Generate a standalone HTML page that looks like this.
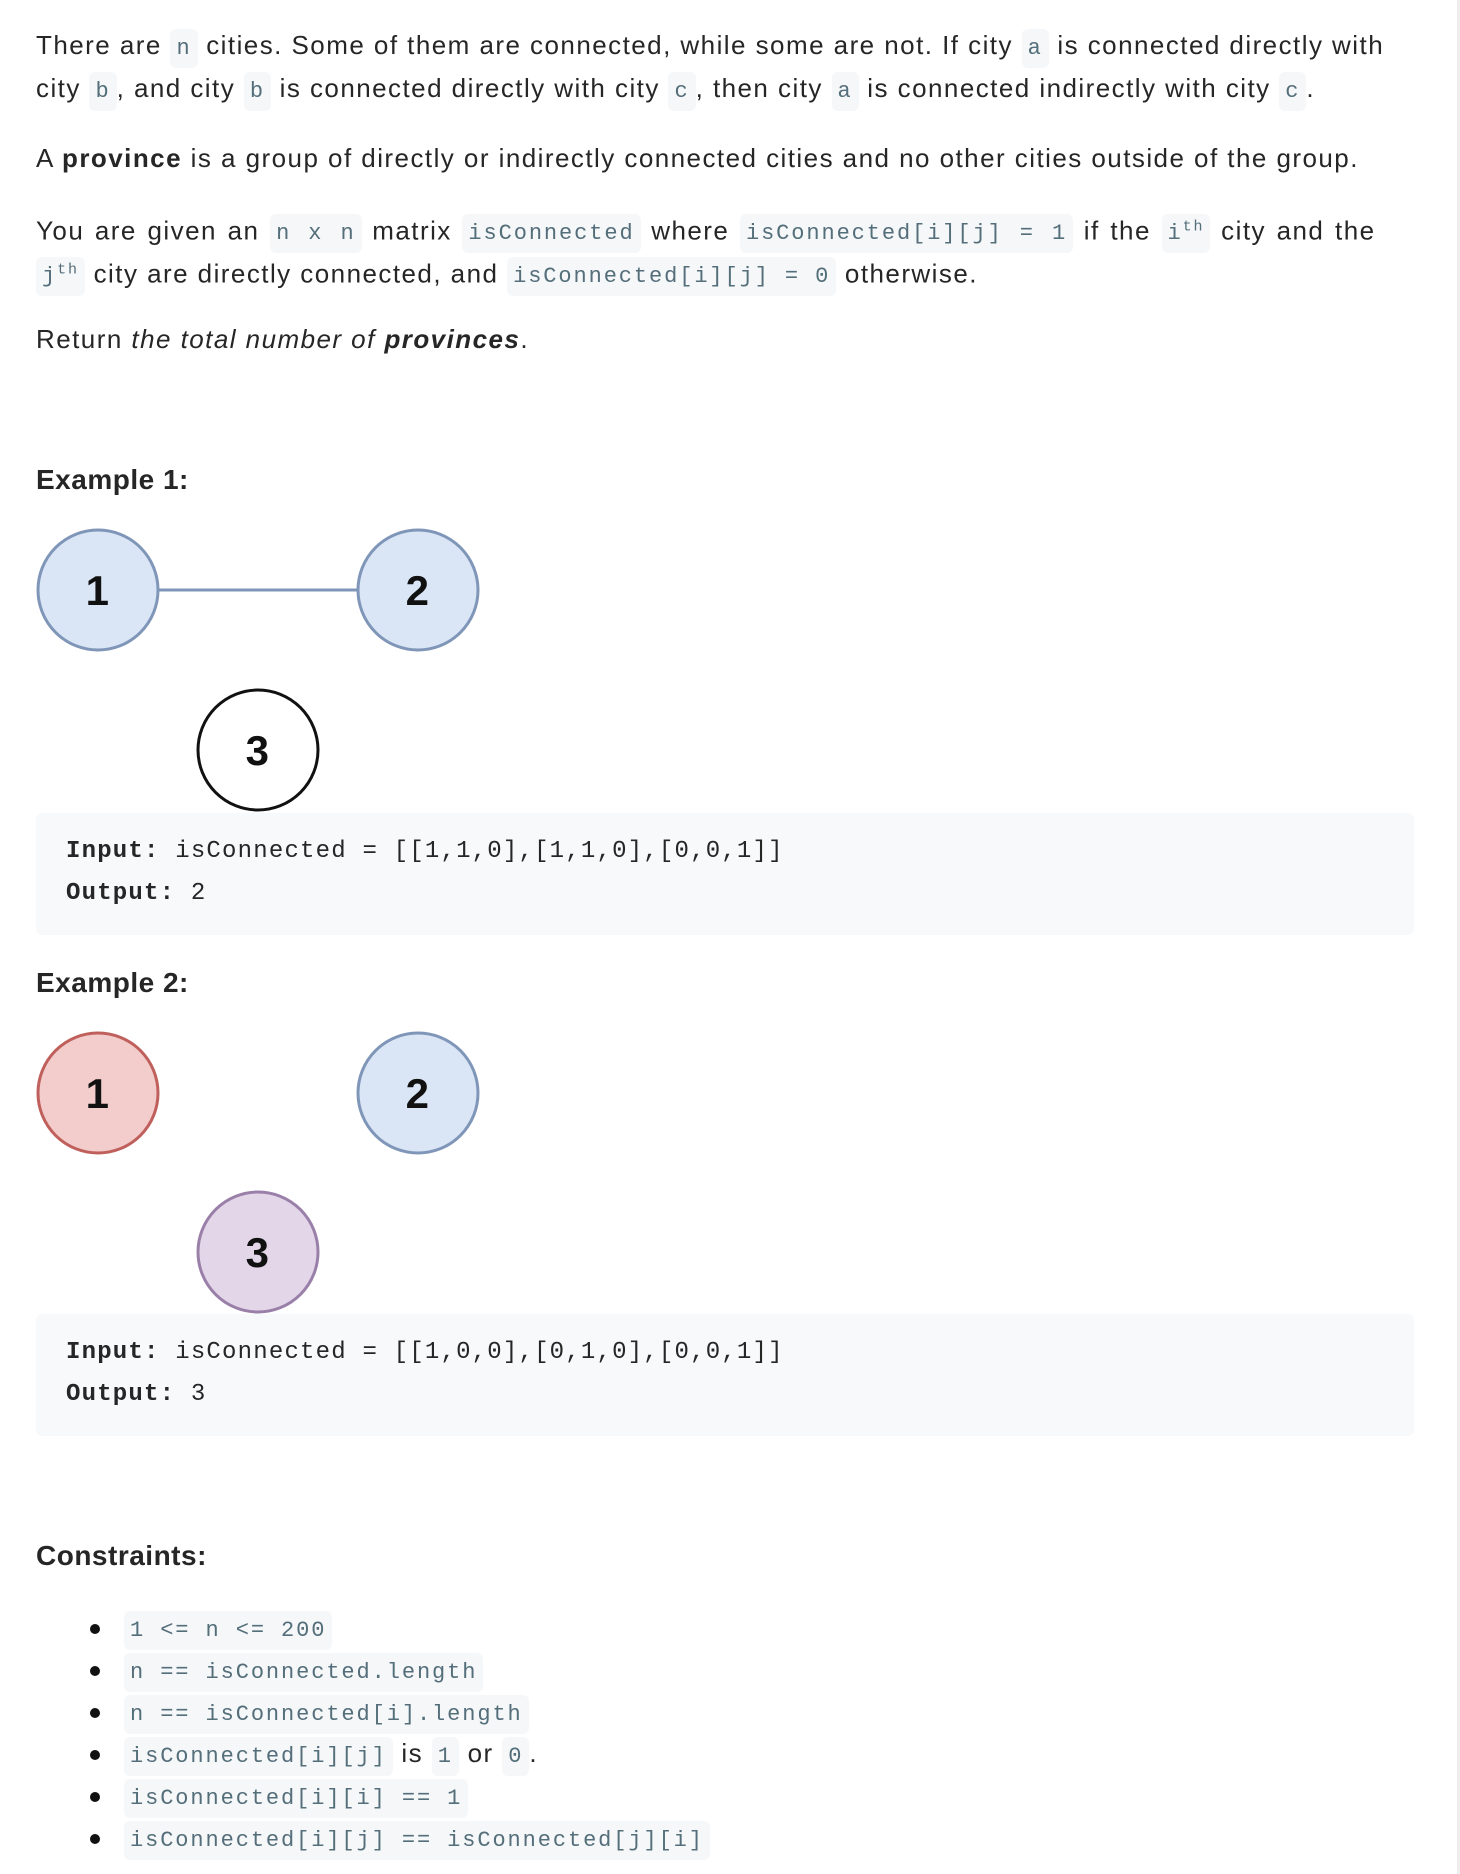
<!DOCTYPE html>
<html><head><meta charset="utf-8"><style>
body{margin:0;width:1460px;height:1874px;background:#fff;position:relative;overflow:hidden;font-family:"Liberation Sans",sans-serif;color:#262626;font-size:26px;letter-spacing:1.45px;}
.b{position:absolute;left:36px;white-space:nowrap;}
.l{position:absolute;left:36px;white-space:nowrap;line-height:43px;}
code{font-family:"Liberation Mono",monospace;font-size:22px;letter-spacing:1.9px;color:#546e7a;background:#f5f7f9;border-radius:6px;padding:7px 6px;}
h3{margin:0;font-size:28px;font-weight:bold;letter-spacing:0.5px;}
.pre{position:absolute;left:36px;width:1378px;background:#f7f9fa;border-radius:6px;}
.pre div{position:absolute;left:30px;font-family:"Liberation Mono",monospace;font-size:24px;letter-spacing:1.2px;color:#262626;white-space:nowrap;}
.vr{position:absolute;left:1457px;top:0;width:3px;height:1874px;background:#eee;}
ul{margin:0;padding:0;list-style:none;}
li{position:absolute;left:90px;white-space:nowrap;}
li:before{content:"";position:absolute;left:0;top:12px;width:10px;height:10px;border-radius:50%;background:#111;}
li span{position:absolute;left:34px;top:0;white-space:nowrap;}
sup{font-family:"Liberation Mono",monospace;font-size:15px;}
</style></head><body>
<div class="vr"></div>
<div class="l" style="top:24px">There are <code>n</code> cities. Some of them are connected, while some are not. If city <code>a</code> is connected directly with</div>
<div class="l" style="top:67px">city <code>b</code>, and city <code>b</code> is connected directly with city <code>c</code>, then city <code>a</code> is connected indirectly with city <code>c</code>.</div>
<div class="l" style="top:137px">A <b>province</b> is a group of directly or indirectly connected cities and no other cities outside of the group.</div>
<div class="l" style="top:206px;word-spacing:2px">You are given an <code>n x n</code> matrix <code>isConnected</code> where <code>isConnected[i][j] = 1</code> if the <code>i<sup>th</sup></code> city and the</div>
<div class="l" style="top:249px"><code>j<sup>th</sup></code> city are directly connected, and <code>isConnected[i][j] = 0</code> otherwise.</div>
<div class="l" style="top:318px">Return <i>the total number of <b>provinces</b></i>.</div>

<div class="b" style="top:464px"><h3>Example 1:</h3></div>
<svg style="position:absolute;left:36px;top:526px" width="450" height="290">
<line x1="122" y1="64" x2="321" y2="64" stroke="#7f96b8" stroke-width="3"/>
<circle cx="62" cy="64" r="60" fill="#dae6f6" stroke="#7f96b8" stroke-width="3"/>
<circle cx="382" cy="64" r="60" fill="#dae6f6" stroke="#7f96b8" stroke-width="3"/>
<circle cx="222" cy="224" r="60" fill="#fff" stroke="#111" stroke-width="3"/>
<text x="62" y="79" font-family="Liberation Sans" font-weight="bold" font-size="42" text-anchor="middle" fill="#111">1</text>
<text x="382" y="79" font-family="Liberation Sans" font-weight="bold" font-size="42" text-anchor="middle" fill="#111">2</text>
<text x="222" y="239" font-family="Liberation Sans" font-weight="bold" font-size="42" text-anchor="middle" fill="#111">3</text>
</svg>
<div class="pre" style="top:813px;height:122px">
<div style="top:25px"><b>Input:</b> isConnected = [[1,1,0],[1,1,0],[0,0,1]]</div>
<div style="top:67px"><b>Output:</b> 2</div>
</div>

<div class="b" style="top:967px"><h3>Example 2:</h3></div>
<svg style="position:absolute;left:36px;top:1029px" width="450" height="290">
<circle cx="62" cy="64" r="60" fill="#f2cdcc" stroke="#c0605c" stroke-width="3"/>
<circle cx="382" cy="64" r="60" fill="#dae6f6" stroke="#7f96b8" stroke-width="3"/>
<circle cx="222" cy="223" r="60" fill="#e2d6e8" stroke="#9a80a9" stroke-width="3"/>
<text x="62" y="79" font-family="Liberation Sans" font-weight="bold" font-size="42" text-anchor="middle" fill="#111">1</text>
<text x="382" y="79" font-family="Liberation Sans" font-weight="bold" font-size="42" text-anchor="middle" fill="#111">2</text>
<text x="222" y="238" font-family="Liberation Sans" font-weight="bold" font-size="42" text-anchor="middle" fill="#111">3</text>
</svg>
<div class="pre" style="top:1314px;height:122px">
<div style="top:25px"><b>Input:</b> isConnected = [[1,0,0],[0,1,0],[0,0,1]]</div>
<div style="top:67px"><b>Output:</b> 3</div>
</div>

<div class="b" style="top:1540px"><h3>Constraints:</h3></div>
<ul>
<li style="top:1612px"><span><code>1 &lt;= n &lt;= 200</code></span></li>
<li style="top:1654px"><span><code>n == isConnected.length</code></span></li>
<li style="top:1696px"><span><code>n == isConnected[i].length</code></span></li>
<li style="top:1738px"><span><code>isConnected[i][j]</code> is <code>1</code> or <code>0</code>.</span></li>
<li style="top:1780px"><span><code>isConnected[i][i] == 1</code></span></li>
<li style="top:1822px"><span><code>isConnected[i][j] == isConnected[j][i]</code></span></li>
</ul>
</body></html>
